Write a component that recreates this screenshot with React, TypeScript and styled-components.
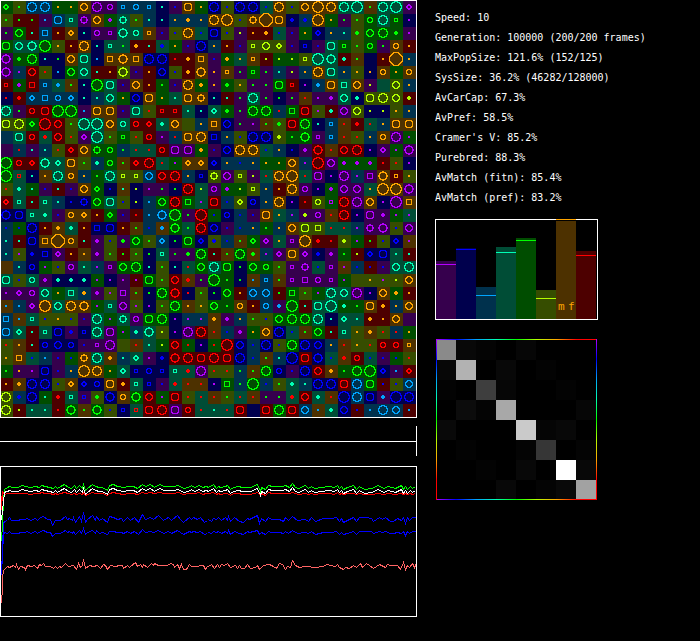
import React from "react";
import styled, { createGlobalStyle } from "styled-components";

const GlobalStyle = createGlobalStyle`
  body {
    margin: 0;
    background: #000;
    color: #fff;
    font-family: "DejaVu Sans Mono", "Liberation Mono", monospace;
    font-size: 10px;
  }
`;

const Page = styled.main`
  display: flex;
  align-items: flex-start;
  gap: 18px;
`;

const WorldColumn = styled.div`
  flex: 0 1 417px;
  min-width: 0;
  display: flex;
  flex-direction: column;
`;

const SideColumn = styled.aside`
  flex: 1 1 0;
  min-width: 220px;
  padding-top: 8px;
`;

const Plot = styled.svg<{ $gap?: number }>`
  display: block;
  width: 100%;
  height: auto;
  margin-top: ${(p) => p.$gap ?? 0}px;
`;

const SidePlot = styled(Plot)<{ $width: number; $inset?: number }>`
  max-width: ${(p) => p.$width}px;
  margin-left: ${(p) => p.$inset ?? 0}px;
`;

const Stats = styled.ul`
  list-style: none;
  margin: 0;
  padding: 0;
`;

const Stat = styled.li`
  line-height: 20px;
  white-space: pre;
`;

const BRIGHT: Record<string, string> = {
  p: "#b400ff",
  b: "#0000ff",
  c: "#00a5ff",
  t: "#00ffb4",
  g: "#00ff00",
  y: "#b4ff00",
  o: "#ffa500",
  r: "#ff0000",
};

const DARK: Record<string, string> = {
  p: "#36004d",
  b: "#00004d",
  c: "#00314d",
  t: "#004d36",
  g: "#004d00",
  y: "#364d00",
  o: "#4d3100",
  r: "#4d0000",
};

/* Each cell: background hue, mark hue, mark shape. "_" is an empty mark. */
const WORLD = `
ggd yg. ccO ccO go. go. ooC ppO ppc ccs ccc ccs bt. pb. ooS go. bbO yb. bbO bbO tb. ooO yb. ooC ooQ ooO ttO ttQ og. ttO ttQ ppd
yg. rg. rg. pc. ccS tts ppx ooC gp+ ttx yg. ct. bt. co. co+ co. ooO ooQ yb. oox ooW ooS bb+ cb+ ooQ go. pg. yg. ggc ttO ggs bp.
pg. ggC rt. ccq ro. ood bt. ppc pps ttD ttc oos pb. yb. ooO tb. bbS yb. py. ro. ro+ tb. pb. go. bbd co. ct. yg+ ggC ggO gg+ pp.
ggS ttC ttD ggQ yo. ro. ooO bt. tts tg. ro+ rt. tb+ go. pb. bbO co. ro. pb. yys yyC yyd pb. bbs pb. ttS ggs yg. ggc pg. ooc ro.
ppD gg+ ggO bt. bg. ooC ttS bc. ooq ooD ooq bbO bbO rr. ro+ ooq pb. go+ to. oos ry. gy. gy. yys ttQ ttD rt+ og. b__ ro. ooW co.
ppD cp. rrC yr. bc. ggC ttC rt. ro. yyD pb. ro. bbC yb. ro+ ooD po. oos pg. ggs pg. ct. py. co. ooO ttS co. yo. bo. ooc go. ooc
rrs gp+ rrq ccs tc+ og. bt. ggQ ttS pb. ooC ro. gg. pb. ooO go+ po. gg+ yo. pg. pg. ggS rrs bp. cc+ ooS ttq ooC py. t__ yyC co.
br. rr+ cck ccq ccc cck bt. ct. ttC go. bbC ooS go. tt. ooS oox bt. rt. pg. ttO pg. bg. pg. or. pp. pp+ ttC bt+ yyS yyO yyC ry+
ttO pg. rrc rrS ggQ ggQ pc. ooS ooS pb. ttS yr. rrs rrs tt. bt. ttd gg+ pg. ggO ggO cr. ggq rrS yp. rt+ ppC yyC by. by. yo. co.
yyS yyO ggd rrQ rrC yg. ttQ ttQ ooC ttc rrc rrd tt+ ooC y__ co. ooq bbC pg. pp. og. yg+ rrS ggO bt. ccs or. rr+ tr. co. ooS ooS
c__ ttS rrc tr+ rrC yr. ppd ttQ yg. ggs yr. rrc pp. cr. ooS ooO bbq co. yb. bbO bbO yy+ gg. ggD pps ccs or. yr. co. ooc ppO gp.
p__ cr. pt. ct. yr. rrk ooC ggx ggc cg. tr. tr. rrc ppS ppS go+ pb. bbC ooO ooO tb. co. bb. pp+ rrD or. rrC rrO bp. ppd gp. ppD
ggQ rrc rrd ttD ttd ooS yg. ct+ ggc og. rrd rrO tr. gp. ook ood bbd co. cb. co. go. go. ooC cp. rrQ ppC gp+ gp+ gp+ rr. yr. bp.
ggQ trs bt. oo. ttO ooc co. gg. ttO yys yys ccC rrC rrO co. bbs yyx ppC yys py. tr. ooO ooQ tr. ppS bp. ppO cp. ppq ooD ros yo.
yr. tt+ gt. pb. rt. pb. ooC ggk bb. ot. by. pp. pg. bg. rrO ty. ppc gp+ gy. yys co. ro. ooO ppc bp. gp+ ppC ppC to. ooQ ooQ ppD
rrk tts rt. tts ct. bb. bbx ggC ttS yb. by. cc. ggC rrO ggq tp. rrS cb. yyd bbc co. ooO bp. rr. yyc gps rrO ppO ooC bp. ppQ ooq
bbD bbS tts tt+ pb. ooc ood ro. ggk pb. rr. cc. ccD ggQ pg. rrQ gb. bbc cb. pb. ooS to. cp. py+ ppc or. rrO bp. ppS pp+ gp. tp.
cb. gb. bbO ro. oo+ tt+ ro. bbq bbS ro. og. cb. oc+ ggD tg. rrO bbC pb. cb. co. gg. co. ooC yyS yyq tr. tr. cp. ppx ppD yb. ppC
ct. rt. bbS ooq ooW ooc rt. pp+ yb. pg+ ggC yg. ccd bg. ggS bbd yb+ cb. og. ggd ppk to. pps ooQ rr+ rr. yy+ gp. rg. yb. bbd op.
ct. yp. bb+ bbq ppk ro. oo. pp+ yg. rg. yg. bg. tts pg. pg+ ggO rt. og. ggO og+ cp. ppd ooS ppk bb+ pp+ gg. ry. bbd bbS tt. rt.
o__ ct. bbc gp. yb. ppc tt. cp. pps ggC ggO bt. yg. bt. tr. ggC ttO ggS bg. ggC ggc yg. pps ppx tb. pps op. cb. rb. pb. ttC ttO
ttS yb. ttc pp+ bt+ bt+ bt+ gp. bp. pp. rp. ggS yg. rrC or+ pg. ggQ gg. bg. oc. ccs og. pps ppq ppc pps gp. y__ yo. yp. yy. ooC
pp. ppd ppc ttC go. ttq co+ pp+ yp. ppq og. bg. ggO rrD br. yg. bg. ggC ro. ccC ccC rg. ggq yg. gp. ttO ttC ppO bp. ooC go+ ro.
oc. cc. ppk ooQ ttC ooO ooD gp. tts ppC yp. bp. yg. ggO oo. yo. ggC gg. ooc ro. ccc pc+ ggQ rt. ttS ttQ gt+ gg. ooS ro+ co. ooC
ccq oc. tts yb. yo. yb. pb. ttO gp. ttx ppc ggS ggO bp. cp. cp. oo+ pp+ co. yg. yb. ggC ggO ggO ttO bt. ttd tt. ro+ ro. ooC p__
ccS ttd rt. tts bbS pb+ bbs ttO ppS gp. ct+ ttD yy. bp. ppO rrO or. cb. pp+ go. ooC bbO tb. og. ggC rt. tts yo. oo+ yr. cr. go.
yr. oo. rt. bbc bbC bbc pb. pps ppO y__ or. tt. gy. rrC gr. bp. gr. rrQ bbC cb. bbO yb. ggO bbO bbC co. or. yo. yr. rrc rrc oos
yo. ooq tb. cc. pb. gb. oox ttO oo+ ct. ttk pp. bb+ rrD rrO rrS rrO rrS bbO cb. og. ct. bbQ rrS bbD tb. or+ rrc tb. pb. gb. yr.
gg. po. pp. bbS pb. co. ooQ ooO go. ttk bbs bbc bbs tts tr+ ppO yr. yr. cg. og. ggO bbc pb. bbO rrC oo+ gg. ggO ggQ bbd pc. rrk
ro. oo+ bbO bbO yb. ood bbd bbc ooS ro+ tts bbs pb. tr+ or. or. bp. ggq cg. ggQ cb. yg. tt+ ct. bbO bbO rrS ccO ggS rb. yb. ccC
yyO cb+ bbO gt. rr+ tts pbs yg+ bbD ooc ggD rrC gp. rrS yr. tr. or. yg. tr. or. pg. pg. tr+ rrC tt+ or. bbQ ccO bbS pc+ bbQ bbO
yyO ry. tt. tt. rr. ggD og. ggD yb. bbs trs rrS rrO ppS rrc tr. tt. tr. rrS b__ rrS ggO rrS ccC oc. tt+ bbC rb. cc. ccO ccC rc.
`
  .trim()
  .split("\n")
  .map((row) => row.split(" "));

const CELL = 13;

/* Pixel outline of a superellipse: power 2 is round, higher is squarer, lower is pointed. */
function outline(size: number, power: number, filled = false): string {
  const mid = (size - 1) / 2;
  const inside = (i: number, j: number) => {
    if (i < 0 || j < 0 || i >= size || j >= size) return false;
    if (power === Infinity) return true;
    const x = Math.abs(i - mid);
    const y = Math.abs(j - mid);
    return x ** power + y ** power <= (size / 2) ** power;
  };
  let d = "";
  for (let j = 0; j < size; j++) {
    for (let i = 0; i < size; i++) {
      const edge = [-1, 0, 1].some((a) => [-1, 0, 1].some((b) => !inside(i + a, j + b)));
      if (inside(i, j) && (filled || edge)) {
        d += `M${i - size / 2} ${j - size / 2}h1v1h-1z`;
      }
    }
  }
  return d;
}

const MARKS: Record<string, string> = {
  ".": outline(2, Infinity),
  "+": outline(4, 2, true),
  s: outline(4, Infinity),
  q: outline(6, Infinity),
  S: outline(8, 4),
  c: outline(6, 2),
  C: outline(8, 2),
  O: outline(10, 2),
  Q: outline(12, 2),
  W: outline(14, 2),
  d: outline(6, 1.4),
  D: outline(10, 1.5),
  k: "M-1-3h2v1h1v1h1v2h-1v1h-1v1h-2v-1h-1v-1h-1v-2h1v-1h1zM-1-1v2h2v-2z",
  x: outline(6, Infinity) + "M-1-4h2v1h-2zM-1 3h2v1h-2zM-4-1h1v2h-1zM3-1h1v2h-1z",
};

function World() {
  return (
    <Plot viewBox="0 0 417 418" shapeRendering="crispEdges" role="img" aria-label="World">
      {WORLD.map((row, r) =>
        row.map((cell, c) => (
          <g key={`${r}-${c}`} transform={`translate(${c * CELL} ${r * CELL + 1})`}>
            <rect width={CELL} height={CELL} fill={DARK[cell[0]]} />
            {MARKS[cell[2]] && (
              <path
                d={MARKS[cell[2]]}
                transform="translate(6 6)"
                fill={BRIGHT[cell[1]]}
                fillRule="evenodd"
              />
            )}
          </g>
        ))
      )}
      <rect x="0.5" y="0.5" width="416" height="417" fill="none" stroke="#fff" />
    </Plot>
  );
}

type Point = [number, number];

const UNITS = 3;
const HALF = 624;

function series(left: string, right: string): Point[] {
  const read = (text: string, shift: number) =>
    text.split(" ").map((pair): Point => {
      const [x, y] = pair.split(",").map(Number);
      return [x + shift, y];
    });
  return [...read(left, 0), ...read(right, HALF)];
}

const MATCH = series(
  "20,200 28,197 36,201 44,201 52,200 66,196 76,198 90,202 104,197 116,200 124,194 135,198 146,201 158,205 165,197 170,205 180,199 193,192 205,201 214,203 222,196 228,204 236,196 246,203 250,193 256,209 262,203 275,193 286,197 296,200 306,201 320,210 328,196 338,193 350,198 370,202 385,197 400,197 412,204 425,193 436,198 450,193 462,200 478,193 492,199 508,198 520,199 534,194 550,203 565,200 572,196 582,200 598,195 606,202 618,199",
  "0,201 14,193 24,203 30,197 36,202 50,197 58,196 66,208 76,200 92,197 100,202 125,202 148,193 155,213 160,200 172,208 180,194 192,199 222,199 230,196 242,200 252,190 260,200 270,203 292,196 300,205 310,197 318,204 340,200 360,197 378,202 386,194 392,205 398,197 404,206 418,201 436,196 444,206 454,198 468,206 490,203 510,196 524,203 540,197 560,205 580,196 586,206 592,197 598,206 606,198 612,204 622,197"
);

const CAPACITY = series(
  "20,300 26,292 34,299 50,300 62,298 72,297 82,293 90,299 104,293 110,299 120,292 130,287 140,298 150,298 157,314 164,300 180,300 194,287 200,298 208,293 216,301 220,290 226,306 238,287 244,302 250,277 256,305 262,296 275,286 285,299 289,287 296,300 306,295 320,307 328,289 340,292 352,298 362,294 370,303 380,292 390,299 402,290 414,305 427,283 434,297 450,290 460,297 475,286 490,299 505,292 513,299 530,286 540,298 550,305 566,290 572,297 580,292 590,298 600,291 612,305 622,300",
  "0,298 8,302 14,293 24,296 30,291 38,300 50,292 56,300 60,287 66,304 78,290 92,303 106,305 118,293 124,298 134,291 148,286 154,308 160,295 170,304 180,290 190,297 212,297 224,303 230,290 240,299 252,287 266,299 290,296 300,302 310,291 320,304 346,294 370,294 384,291 392,304 398,295 404,305 416,300 434,291 444,304 454,292 470,291 490,293 496,302 512,290 522,298 532,292 546,303 556,303 566,295 578,299 586,290 592,309 598,291 604,300 612,292 622,290"
);

const SYSTEM_SIZE = series(
  "4,548 5,502 7,470 10,450 14,443 20,438 28,442 38,434 44,442 49,433 55,446 60,439 72,440 76,446 82,434 94,437 102,436 110,443 118,433 124,435 130,430 135,439 150,437 158,445 164,437 170,445 176,437 184,442 194,430 205,438 220,436 227,448 234,430 240,440 246,436 250,418 256,445 268,434 278,438 290,434 300,445 308,433 314,434 320,448 330,436 345,438 356,436 366,435 370,445 382,434 388,441 404,427 412,438 420,432 426,440 430,433 440,440 452,430 458,436 463,430 474,436 500,436 510,430 518,432 522,440 530,433 536,443 542,432 550,447 558,446 566,431 574,439 590,438 600,434 608,436 614,446 622,437",
  "0,438 10,431 18,445 28,433 34,441 40,431 48,436 58,428 66,441 80,435 86,444 92,436 98,445 108,443 116,433 126,444 140,440 148,434 154,448 166,436 184,433 196,438 204,445 212,430 222,433 230,446 238,437 246,440 253,421 262,435 272,442 290,438 320,442 345,438 355,433 380,437 386,432 394,440 404,447 412,440 424,444 436,436 444,441 456,430 462,440 474,428 482,434 496,445 512,433 530,440 536,431 546,436 566,436 576,447 586,427 592,448 598,436 604,442 612,430 618,440 624,430"
);

const follow = (source: Point[], from: number, to: number, gain: number, start: Point[]): Point[] => [
  ...start,
  ...source.map(([x, y]): Point => [x, to + (y - from) * gain]),
];

const LINES: { color: string; points: Point[] }[] = [
  { color: "#ff6464", points: SYSTEM_SIZE },
  {
    color: "#0000ff",
    points: follow(CAPACITY, 298, 337, 0.6, [[4, 465], [7, 400], [9, 345], [13, 337]]),
  },
  {
    color: "#0000ff",
    points: follow(CAPACITY, 298, 298, 1, [[4, 465], [7, 380], [9, 310], [13, 302]]),
  },
  {
    color: "#ff0000",
    points: follow(MATCH, 199, 219, 0.5, [[4, 270], [7, 214], [12, 222]]),
  },
  {
    color: "#00ff00",
    points: follow(MATCH, 199, 199, 1, [[4, 362], [7, 306], [8, 240], [12, 206]]),
  },
  {
    color: "#ffffff",
    points: follow(MATCH, 199, 211, 1, [[4, 300], [5, 270], [10, 242], [11, 220], [14, 212]]),
  },
  {
    color: "#ff0000",
    points: [[3, 268], [4, 240], [7, 214]],
  },
];

const toPath = (points: Point[]) =>
  points
    .map(([x, y]) => `${Math.round(x / UNITS) + 0.5},${Math.round(y / UNITS) - 46 + 0.5}`)
    .join(" ");

function Timeline() {
  return (
    <Plot $gap={8} viewBox="0 0 417 30" shapeRendering="crispEdges" role="img" aria-label="Timeline">
      <path d="M0 15.5H417M416.5 0V30" stroke="#fff" fill="none" />
    </Plot>
  );
}

function History() {
  return (
    <Plot $gap={10} viewBox="0 0 417 151" shapeRendering="crispEdges" role="img" aria-label="History">
      {LINES.map((line, i) => (
        <polyline key={i} points={toPath(line.points)} fill="none" stroke={line.color} />
      ))}
      <rect x="0.5" y="0.5" width="416" height="150" fill="none" stroke="#fff" />
    </Plot>
  );
}

const STATS = [
  "Speed: 10",
  "Generation: 100000 (200/200 frames)",
  "MaxPopSize: 121.6% (152/125)",
  "SysSize: 36.2% (46282/128000)",
  "AvCarCap: 67.3%",
  "AvPref: 58.5%",
  "Cramer's V: 85.2%",
  "Purebred: 88.3%",
  "AvMatch (fitn): 85.4%",
  "AvMatch (pref): 83.2%",
];

/* Top of the bar and top of its marker line, from the top of the frame. */
const BARS = [
  { hue: "p", top: 42, mark: 45 },
  { hue: "b", top: 29, mark: 30 },
  { hue: "c", top: 68, mark: 76 },
  { hue: "t", top: 28, mark: 33 },
  { hue: "g", top: 19, mark: 21 },
  { hue: "y", top: 71, mark: 79 },
  { hue: "o", top: 2, mark: 0 },
  { hue: "r", top: 32, mark: 36 },
];

function Populations() {
  return (
    <SidePlot
      $gap={11}
      $width={163}
      viewBox="0 0 163 101"
      shapeRendering="crispEdges"
      role="img"
      aria-label="Populations"
    >
      {BARS.map((bar, i) => (
        <rect
          key={bar.hue}
          x={1 + i * 20}
          y={bar.top}
          width={20}
          height={100 - bar.top}
          fill={DARK[bar.hue]}
        />
      ))}
      <rect x="0.5" y="0.5" width="162" height="100" fill="none" stroke="#fff" />
      {BARS.map((bar, i) => (
        <rect key={bar.hue} x={1 + i * 20} y={bar.mark} width={20} height={1} fill={BRIGHT[bar.hue]} />
      ))}
      <text x="123" y="91" fontSize="11" fill={BRIGHT.o}>
        m
      </text>
      <text x="133" y="91" fontSize="11" fill={BRIGHT.o}>
        f
      </text>
    </SidePlot>
  );
}

const MATRIX = [
  [138, 8, 4, 0, 6, 0, 0, 0],
  [7, 178, 0, 8, 0, 3, 0, 0],
  [3, 0, 62, 6, 0, 0, 3, 0],
  [0, 12, 4, 168, 0, 0, 0, 6],
  [9, 0, 0, 0, 202, 5, 8, 0],
  [0, 3, 0, 0, 4, 54, 0, 4],
  [0, 0, 3, 0, 8, 0, 255, 8],
  [0, 0, 0, 8, 0, 4, 9, 162],
];

const HUES = ["p", "b", "c", "t", "g", "y", "o", "r"];

function Matches() {
  const stops = HUES.map((hue, i) => (
    <stop key={hue} offset={`${(i * 100) / 8}%`} stopColor={BRIGHT[hue]} />
  ));
  return (
    <SidePlot
      $gap={19}
      $width={161}
      $inset={1}
      viewBox="0 0 161 161"
      shapeRendering="crispEdges"
      role="img"
      aria-label="Matches"
    >
      <defs>
        <linearGradient id="across">{stops}</linearGradient>
        <linearGradient id="down" x2="0" y2="1">
          {stops}
        </linearGradient>
      </defs>
      {MATRIX.map((row, r) =>
        row.map((v, c) => (
          <rect
            key={`${r}-${c}`}
            x={c * 20}
            y={r * 20 + 1}
            width={20}
            height={20}
            fill={`rgb(${v}, ${v}, ${v})`}
          />
        ))
      )}
      <rect width="161" height="1" fill="url(#across)" />
      <rect y="160" width="161" height="1" fill="url(#across)" />
      <rect width="1" height="161" fill="url(#down)" />
      <rect x="160" width="1" height="161" fill="url(#down)" />
    </SidePlot>
  );
}

export default function App() {
  return (
    <>
      <GlobalStyle />
      <Page>
        <WorldColumn>
          <World />
          <Timeline />
          <History />
        </WorldColumn>
        <SideColumn>
          <Stats>
            {STATS.map((line) => (
              <Stat key={line}>{line}</Stat>
            ))}
          </Stats>
          <Populations />
          <Matches />
        </SideColumn>
      </Page>
    </>
  );
}
